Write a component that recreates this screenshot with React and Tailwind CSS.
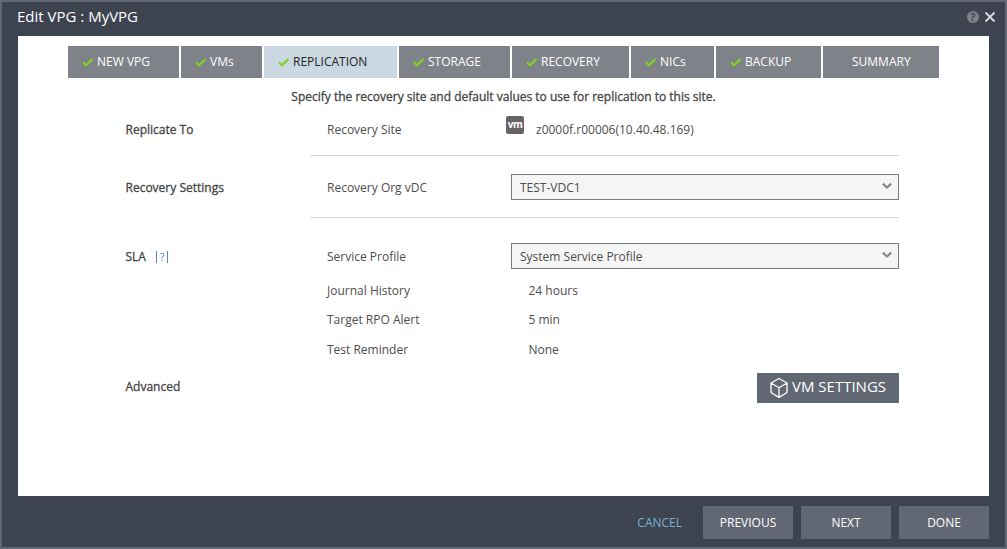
import React from "react";

const tabs = [
  { name: "NEW VPG", w: "w-[111px]", done: true },
  { name: "VMs", w: "w-[81px]", done: true },
  { name: "REPLICATION", w: "w-[133px]", done: true, active: true },
  { name: "STORAGE", w: "w-[111px]", done: true },
  { name: "RECOVERY", w: "w-[117px]", done: true },
  { name: "NICs", w: "w-[83px]", done: true },
  { name: "BACKUP", w: "w-[105px]", done: true },
  { name: "SUMMARY", w: "w-[116px]", done: false },
];

const heading = "text-[#444] [-webkit-text-stroke:0.3px_#444]";

function Check() {
  return (
    <svg width="12" height="9" viewBox="0 0 12 9" className="mr-[3px] shrink-0">
      <path d="M1 4.4 L4 7.3 L10.4 1.1" fill="none" stroke="#7ed321" strokeWidth="2.2" />
    </svg>
  );
}

function Tab({ tab }) {
  return (
    <div
      className={`flex h-8 shrink-0 items-center ${tab.w} ${tab.done ? "pl-[14px]" : "pl-[29px]"} ${
        tab.active ? "bg-[#cbd8e2] text-[#222]" : "bg-[#808289] text-white"
      }`}
    >
      {tab.done && <Check />}
      <span>{tab.name}</span>
    </div>
  );
}

function Select({ children }) {
  return (
    <div className="flex h-[26px] w-[388px] items-center justify-between border border-[#767c87] bg-[#f5f5f5] pr-[6px] pl-2">
      <span className="pt-px">{children}</span>
      <svg width="10" height="8" viewBox="0 0 10 8" className="mb-[2px]">
        <path d="M0.8 1.6 L5 5.6 L9.2 1.6" fill="none" stroke="#85888f" strokeWidth="2.2" />
      </svg>
    </div>
  );
}

function Detail({ label, value, h }) {
  return (
    <div className={`flex items-center pl-[17px] ${h}`}>
      <span className="w-[201.5px]">{label}</span>
      <span>{value}</span>
    </div>
  );
}

function FooterButton({ children }) {
  return (
    <button className="flex h-[33px] w-[90px] items-center justify-center bg-[#626873] text-white">{children}</button>
  );
}

export default function App() {
  return (
    <div className="flex h-[549px] w-[1007px] flex-col overflow-hidden border-2 border-[#626873] bg-[#3e444f] px-4 font-['Open_Sans',sans-serif] text-[12px] leading-4 whitespace-nowrap text-[#4d4d4d]">
      <header className="-mx-px flex h-[34px] shrink-0 items-start justify-between pt-[4px]">
        <h1 className="text-[15px] leading-5 text-white">Edit VPG : MyVPG</h1>
        <div className="-mr-[6px] flex items-center gap-[5px] pt-[5px]">
          <span className="flex size-3 items-center justify-center rounded-full bg-[#808289] text-[10px] leading-3 font-bold text-[#3e444f]">
            ?
          </span>
          <svg width="12" height="12" viewBox="0 0 12 12">
            <path d="M1.5 1.5 L10.5 10.5 M10.5 1.5 L1.5 10.5" stroke="#dcdde0" strokeWidth="1.8" />
          </svg>
        </div>
      </header>

      <main className="flex h-[460px] w-[971px] shrink-0 flex-col bg-white pt-[10px] pl-[50px]">
        <nav className="flex gap-[2px]">
          {tabs.map((t) => (
            <Tab key={t.name} tab={t} />
          ))}
        </nav>
        <p className={`mt-[11px] h-4 w-[871px] text-center ${heading}`}>
          Specify the recovery site and default values to use for replication to this site.
        </p>

        <section className="flex h-[51px] pl-[57.5px]">
          <div className={`w-[184.5px] pt-[17px] ${heading}`}>Replicate To</div>
          <div className="flex w-[589px] border-b border-[#d8d8d8] pl-[17px]">
            <span className="w-[179px] pt-[17px]">Recovery Site</span>
            <span className="mt-[11px] mr-3 flex size-[18px] items-center justify-center rounded-[2px] bg-[#686466] pb-[2px] text-[10px] leading-3 font-bold tracking-[-0.6px] text-white">
              vm
            </span>
            <span className="pt-[17px]">z0000f.r00006(10.40.48.169)</span>
          </div>
        </section>

        <section className="flex h-[62px] pl-[57.5px]">
          <div className={`w-[184.5px] pt-[24px] ${heading}`}>Recovery Settings</div>
          <div className="flex w-[589px] border-b border-[#d8d8d8] pl-[17px]">
            <span className="w-[184px] pt-[24px]">Recovery Org vDC</span>
            <div className="pt-[18px]">
              <Select>TEST-VDC1</Select>
            </div>
          </div>
        </section>

        <section className="flex h-[147px] pl-[57.5px]">
          <div className="flex w-[184.5px] pt-[31px]">
            <span className={`w-[30.5px] ${heading}`}>SLA</span>
            <span className="mt-[2px] flex h-3 w-3 items-center justify-center border-x border-[#5585d6] text-[11px] text-[#5585d6]">
              ?
            </span>
          </div>
          <div className="w-[589px]">
            <div className="flex h-[59px] pl-[17px]">
              <span className="w-[184px] pt-[31px]">Service Profile</span>
              <div className="pt-[25px]">
                <Select>System Service Profile</Select>
              </div>
            </div>
            <Detail label="Journal History" value="24 hours" h="h-[28px]" />
            <Detail label="Target RPO Alert" value="5 min" h="h-[30px]" />
            <Detail label="Test Reminder" value="None" h="h-[29px]" />
          </div>
        </section>

        <section className="flex pt-2 pl-[57.5px]">
          <div className={`w-[631.5px] pt-[6px] ${heading}`}>Advanced</div>
          <button className="flex h-[30px] w-[142px] items-center bg-[#626873] pl-3 text-white">
            <svg width="20" height="22" viewBox="0 0 20 22" className="mr-[3px]">
              <path
                d="M10 1.5 L18 6 V15.5 L10 20.4 L2 15.5 V6 Z M2 6 L10 10.7 L18 6 M10 10.7 V20"
                fill="none"
                stroke="#fff"
                strokeWidth="1.3"
                strokeLinejoin="round"
              />
            </svg>
            <span className="pb-[4px] text-[15px]">VM SETTINGS</span>
          </button>
        </section>
      </main>

      <footer className="flex w-[971px] justify-end gap-2 pt-[10px]">
        <button className="mr-[13px] h-[33px] text-[#78b3d0]">CANCEL</button>
        <FooterButton>PREVIOUS</FooterButton>
        <FooterButton>NEXT</FooterButton>
        <FooterButton>DONE</FooterButton>
      </footer>
    </div>
  );
}
